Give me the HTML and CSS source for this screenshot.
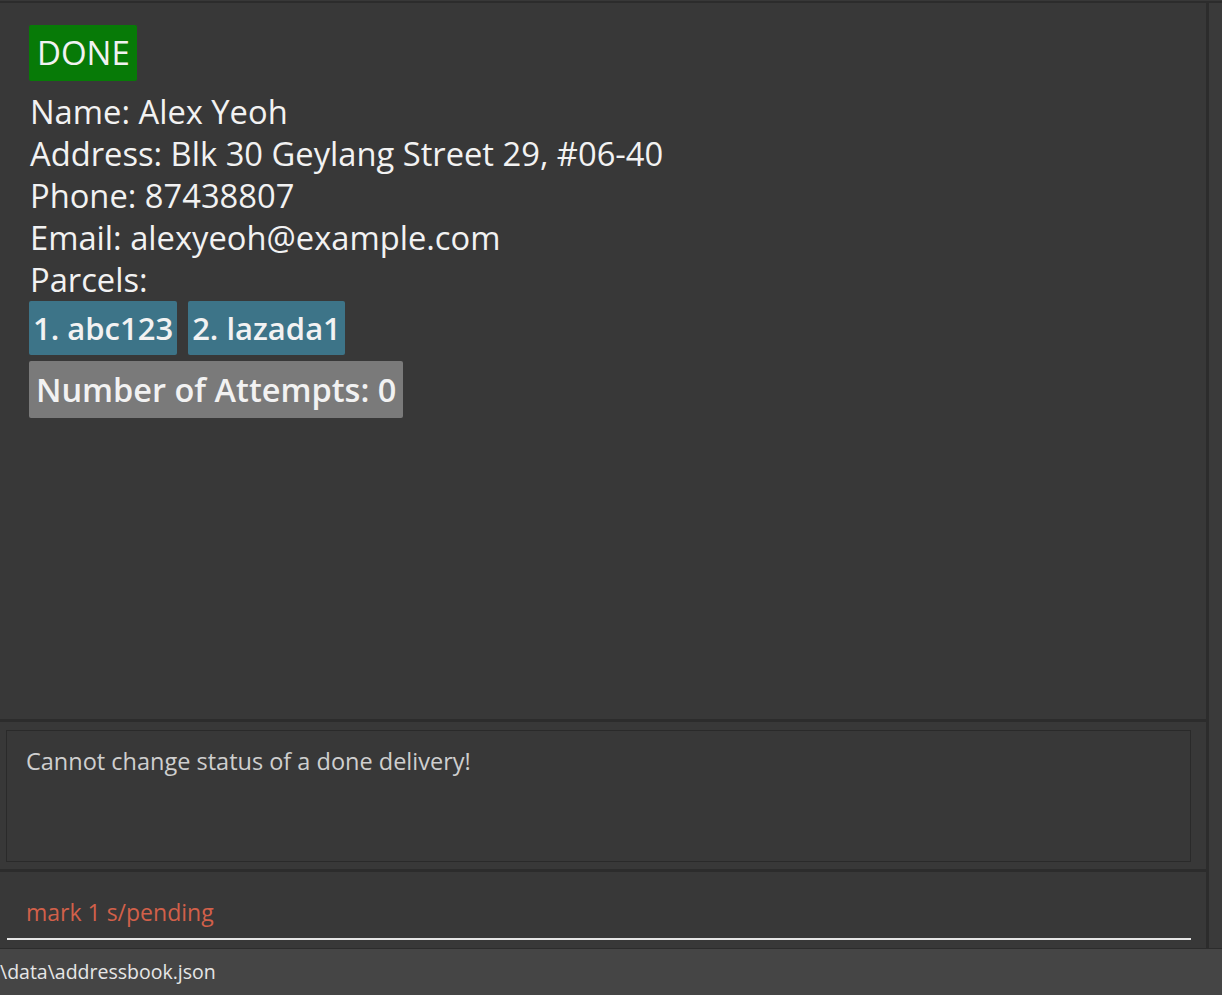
FILE: index.html
```html
<!DOCTYPE html>
<html>
<head>
<meta charset="utf-8">
<link rel="stylesheet" href="styles.css">
</head>
<body>
<div class="app">
  <div class="main">
    <div class="left">
      <section class="card-panel">
        <div class="card">
          <div class="status-row"><span class="status done">DONE</span></div>
          <div class="field">Name: Alex Yeoh</div>
          <div class="field">Address: Blk 30 Geylang Street 29, #06-40</div>
          <div class="field">Phone: 87438807</div>
          <div class="field">Email: alexyeoh@example.com</div>
          <div class="field">Parcels:</div>
          <div class="tags">
            <span class="tag">1. abc123</span>
            <span class="tag">2. lazada1</span>
          </div>
          <div class="attempts-row"><span class="attempts">Number of Attempts: 0</span></div>
        </div>
      </section>
      <section class="result-panel">
        <div class="result-box">Cannot change status of a done delivery!</div>
      </section>
      <section class="command-panel">
        <div class="command-input">mark 1 s/pending</div>
      </section>
    </div>
    <div class="gutter"></div>
  </div>
  <footer class="status-bar">\data\addressbook.json</footer>
</div>
</body>
</html>
```
FILE: styles.css
```css
html, body {
  margin: 0;
  padding: 0;
  background: #383838;
}
.app {
  width: 1222px;
  height: 995px;
  display: flex;
  flex-direction: column;
  font-family: "Open Sans", "Noto Sans", sans-serif;
}
.main {
  flex: 1;
  display: flex;
  margin-top: 1px;
  border-top: 2px solid #2c2c2c;
  min-height: 0;
}
.left {
  width: 1206px;
  display: flex;
  flex-direction: column;
}
.gutter {
  flex: 1;
  border-left: 3px solid #2c2c2c;
  background: #3a3a3a;
}
.card-panel {
  height: 719px;
  border-bottom: 3px solid #2c2c2c;
  box-sizing: border-box;
}
.card {
  padding: 22px 0 0 29px;
  color: #f2f2f2;
}
.status-row { display: flex; margin-bottom: 10px; }
.status {
  display: inline-block;
  height: 56px;
  line-height: 56px;
  padding: 0 7px 0 8px;
  border-radius: 2px;
  font-size: 33px;
  color: #f2f2f2;
}
.done { background: #077a07; }
.field {
  font-size: 32.7px;
  line-height: 42px;
  padding-left: 1px;
}
.tags {
  display: flex;
  gap: 11px;
}
.tag {
  display: inline-block;
  height: 54px;
  line-height: 54px;
  padding: 0 4px;
  background: #3d7488;
  border-radius: 2px;
  font-size: 31px;
  font-weight: 600;
  color: #f2f2f2;
}
.attempts-row { display: flex; margin-top: 6px; }
.attempts {
  display: inline-block;
  height: 57px;
  line-height: 57px;
  padding: 0 7px;
  background: #7a7a7a;
  border-radius: 2px;
  font-size: 32.5px;
  font-weight: 600;
  color: #f2f2f2;
}
.result-panel {
  height: 150px;
  padding: 8px 15px 0 6px;
  border-bottom: 3px solid #2c2c2c;
  box-sizing: border-box;
}
.result-box {
  height: 132px;
  box-sizing: border-box;
  border: 1px solid #2a2a2a;
  padding: 14px 19px;
  font-size: 23.5px;
  line-height: 32px;
  color: #cfcfcf;
}
.command-panel {
  flex: 1;
  padding: 0 15px 0 7px;
  display: flex;
  flex-direction: column;
}
.command-input {
  margin-top: auto;
  height: 60px;
  box-sizing: border-box;
  padding: 16px 0 0 19px;
  font-size: 23px;
  line-height: 32px;
  color: #d2604a;
  border-bottom: 2px solid #e6e6e6;
  margin-bottom: 8px;
}
.status-bar {
  height: 47px;
  flex: none;
  border-top: 1px solid #2c2c2c;
  background: #454545;
  color: #e6e6e6;
  font-size: 19.5px;
  line-height: 46px;
  padding-left: 0;
  box-sizing: border-box;
}
```
